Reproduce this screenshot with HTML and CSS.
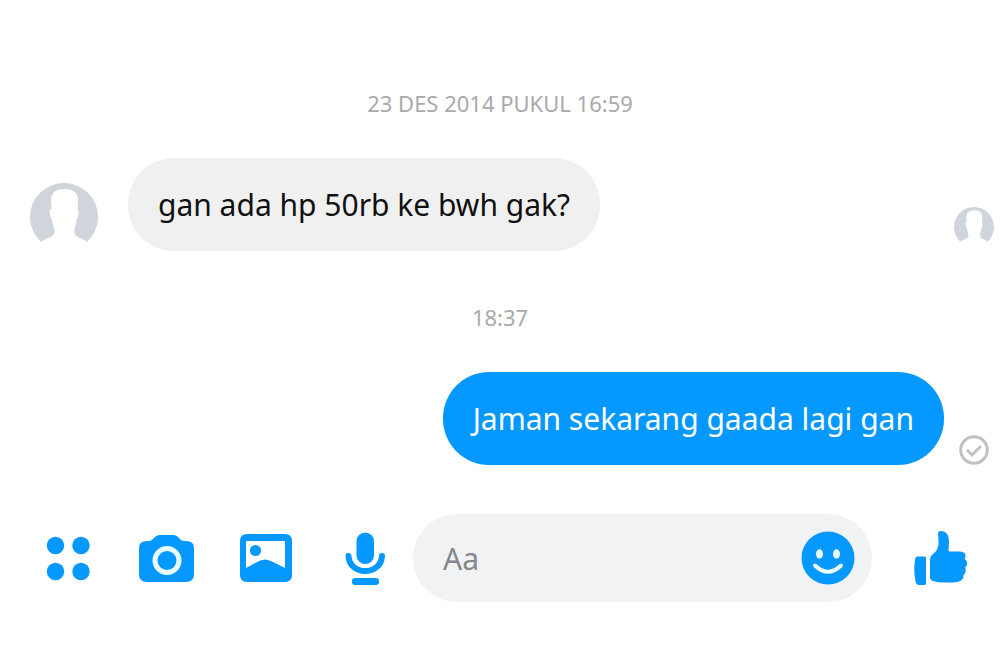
FILE: index.html
```html
<!DOCTYPE html>
<html lang="id">
<head>
<meta charset="utf-8">
<meta name="viewport" content="width=device-width, initial-scale=1">
<title>Chat</title>
<link rel="stylesheet" href="styles.css">
</head>
<body>
<svg class="defs" aria-hidden="true">
  <symbol id="person" viewBox="0 0 68 68">
    <path d="M11 59A34 34 0 1 1 57 59Q55 57 50 55C45 53 44 51 44.500 46C45 43 46 42 46.500 37Q48.500 34 48.500 30Q49 27 47.500 26L48 17C48 9 42 6 34.500 6S21 9 21 17L21.500 26Q19 26 19.500 29Q20 34 22 37C22.500 42 24 43 24.500 46C25 51 24 53 18 55Q13 57 11 59Z"/>
  </symbol>
</svg>
<main class="chat">
  <time class="stamp">23 DES 2014 PUKUL 16:59</time>
  <div class="row">
    <svg class="avatar" role="img" aria-label="Avatar"><use href="#person"/></svg>
    <p class="bubble received">gan ada hp 50rb ke bwh gak?</p>
    <svg class="seen" role="img" aria-label="Seen"><use href="#person"/></svg>
  </div>
  <time class="stamp later">18:37</time>
  <div class="row outgoing">
    <p class="bubble sent">Jaman sekarang gaada lagi gan</p>
    <svg class="status" viewBox="0 0 30 30" role="img" aria-label="Sent"><circle cx="15" cy="15" r="13.3"/><path d="M8 15l5 5 9-9"/></svg>
  </div>
  <form class="composer">
    <div class="tools">
      <button type="button" class="tool" aria-label="More"><svg viewBox="0 0 56 56"><circle cx="15.500" cy="15.500" r="8.700"/><circle cx="41" cy="15.500" r="8.700"/><circle cx="15.500" cy="41.500" r="8.700"/><circle cx="41" cy="41.500" r="8.700"/></svg></button>
      <button type="button" class="tool" aria-label="Camera"><svg viewBox="0 0 56 56"><path d="M8 11C13 11 13 10 15 8C18 5 19 5 23 5H32C36 5 37 5 40 8C42 10 42 11 47 11Q55 11 55 18V44Q55 52 47 52H8Q0 52 0 44V18Q0 11 8 11Z"/><circle class="line" cx="28" cy="30.500" r="12" /></svg></button>
      <button type="button" class="tool" aria-label="Picture"><svg viewBox="0 0 56 56"><path fill-rule="evenodd" d="M9 4h38q7 0 7 7v34q0 7-7 7H9q-7 0-7-7V11q0-7 7-7Zm0 7q-1 0-1 1V38l11-6q8-5 16 0l12 6V12q0-1-1-1Z"/><circle cx="17.500" cy="20.500" r="5.600"/></svg></button>
      <button type="button" class="tool" aria-label="Voice"><svg viewBox="0 0 56 56"><rect x="19.500" y="2.500" width="17.500" height="31.500" rx="8.750"/><path class="arc" d="M11.500 26C12.500 46 44 46 45 26"/><rect x="15" y="48" width="27" height="7" rx="3"/></svg></button>
    </div>
    <div class="field">
      <input class="entry" type="text" placeholder="Aa" aria-label="Message">
      <button type="button" class="tool" aria-label="Emoji"><svg viewBox="0 0 56 56"><circle cx="28" cy="28" r="26.500"/><ellipse class="light" cx="19.500" cy="24" rx="3.500" ry="4.700"/><ellipse class="light" cx="36.500" cy="24" rx="3.500" ry="4.700"/><path class="smile" d="M15 35.500Q28 48 41 35.500"/></svg></button>
    </div>
    <button type="button" class="tool" aria-label="Like"><svg viewBox="0 0 56 56"><path d="M5 26.500H12.500Q14 26.500 14 28V53Q14 55 12.500 55H7Q4 55 3.500 51C2 44 2 36 3 30Q3.300 26.500 5 26.500ZM18 29Q18 26 21 24C26 20 27 16 26.500 10L26 4Q26 1 29 1C35 1 37 6 37 12L36.500 20.500Q36.500 21.500 38 21.500H48Q54 22 53.500 26Q53.500 28 52.500 29Q55.500 31 55 34Q55 36 53 37.500Q54.500 39 53.500 42Q53 44 51.500 45Q52 48 49.500 50Q47 52 41 52.500H32Q26 52.500 21 51Q18 50 18 47Z"/></svg></button>
  </form>
</main>
</body>
</html>
```
FILE: styles.css
```css
* {
  box-sizing: border-box;
}

body {
  margin: 0;
  background: #fff;
  color: #111;
  font-family: "Noto Sans", "Open Sans", sans-serif;
}

.defs {
  position: absolute;
  width: 0;
  height: 0;
}

.chat {
  display: flex;
  flex-direction: column;
  padding: 88px 0 44px;
}

.stamp {
  text-align: center;
  color: #aaa;
  font-size: 22px;
  line-height: 30px;
}

.later {
  margin-top: 51px;
}

.row {
  display: flex;
  align-items: flex-end;
  gap: 30px;
  margin-top: 40px;
  padding: 0 6px 0 30px;
}

.outgoing {
  justify-content: flex-end;
  gap: 15px;
  padding-right: 11px;
}

.avatar {
  width: 68px;
  height: 68px;
  fill: #d0d5db;
}

.seen {
  width: 40px;
  height: 40px;
  margin-left: auto;
  margin-bottom: 4px;
  fill: #d0d5db;
}

.status {
  width: 30px;
  height: 30px;
  fill: none;
  stroke: #bfc1c5;
  stroke-width: 3;
}

.bubble {
  margin: 0;
  padding: 24px 30px;
  border-radius: 46px;
  font-size: 30px;
  line-height: 45px;
}

.received {
  background: #f0f0f0;
}

.sent {
  background: #0598ff;
  color: #fff;
}

.composer {
  display: flex;
  align-items: center;
  margin-top: 49px;
  padding: 0 32px 0 40px;
}

.tools {
  display: flex;
  gap: 43px;
  margin-right: 20px;
}

.tool {
  flex: none;
  width: 56px;
  height: 56px;
  padding: 0;
  border: 0;
  background: none;
  cursor: pointer;
}

.tool svg {
  display: block;
  width: 100%;
  height: 100%;
  fill: #0598ff;
}

.tool .line {
  fill: none;
  stroke: #e9fcff;
  stroke-width: 5;
}

.tool .arc {
  fill: none;
  stroke: #0598ff;
  stroke-width: 6;
  stroke-linecap: round;
}

.tool .light {
  fill: #e9fcff;
}

.tool .smile {
  fill: none;
  stroke: #e9fcff;
  stroke-width: 4;
  stroke-linecap: round;
}

.field {
  display: flex;
  flex: 1;
  align-items: center;
  min-width: 0;
  height: 88px;
  margin-right: 40px;
  padding: 0 16px 0 30px;
  border-radius: 44px;
  background: #f1f2f4;
}

.entry {
  flex: 1;
  min-width: 0;
  padding: 0;
  border: 0;
  outline: 0;
  background: none;
  color: #111;
  font: inherit;
  font-size: 30px;
}

.entry::placeholder {
  color: #85878a;
  opacity: 1;
}
```
